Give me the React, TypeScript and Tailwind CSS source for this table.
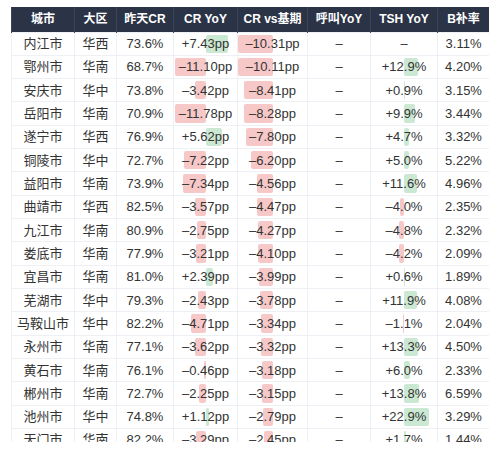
type Row = {
  city: string;
  region: string;
  cr: string;
  yoy: number;
  base: number;
  tsh: number | null;
  bRate: string;
};

const rows: Row[] = [
  { city: "内江市", region: "华西", cr: "73.6%", yoy: 7.43, base: -10.31, tsh: null, bRate: "3.11%" },
  { city: "鄂州市", region: "华南", cr: "68.7%", yoy: -11.1, base: -10.11, tsh: 12.9, bRate: "4.20%" },
  { city: "安庆市", region: "华中", cr: "73.8%", yoy: -3.42, base: -8.41, tsh: 0.9, bRate: "3.15%" },
  { city: "岳阳市", region: "华南", cr: "70.9%", yoy: -11.78, base: -8.28, tsh: 9.9, bRate: "3.44%" },
  { city: "遂宁市", region: "华西", cr: "76.9%", yoy: 5.62, base: -7.8, tsh: 4.7, bRate: "3.32%" },
  { city: "铜陵市", region: "华中", cr: "72.7%", yoy: -7.22, base: -6.2, tsh: 5.0, bRate: "5.22%" },
  { city: "益阳市", region: "华南", cr: "73.9%", yoy: -7.34, base: -4.56, tsh: 11.6, bRate: "4.96%" },
  { city: "曲靖市", region: "华西", cr: "82.5%", yoy: -3.57, base: -4.47, tsh: -4.0, bRate: "2.35%" },
  { city: "九江市", region: "华南", cr: "80.9%", yoy: -2.75, base: -4.27, tsh: -4.8, bRate: "2.32%" },
  { city: "娄底市", region: "华南", cr: "77.9%", yoy: -3.21, base: -4.1, tsh: -4.2, bRate: "2.09%" },
  { city: "宜昌市", region: "华南", cr: "81.0%", yoy: 2.39, base: -3.99, tsh: 0.6, bRate: "1.89%" },
  { city: "芜湖市", region: "华中", cr: "79.3%", yoy: -2.43, base: -3.78, tsh: 11.9, bRate: "4.08%" },
  { city: "马鞍山市", region: "华中", cr: "82.2%", yoy: -4.71, base: -3.34, tsh: -1.1, bRate: "2.04%" },
  { city: "永州市", region: "华南", cr: "77.1%", yoy: -3.62, base: -3.32, tsh: 13.3, bRate: "4.50%" },
  { city: "黄石市", region: "华南", cr: "76.1%", yoy: -0.46, base: -3.18, tsh: 6.0, bRate: "2.33%" },
  { city: "郴州市", region: "华南", cr: "72.7%", yoy: -2.25, base: -3.15, tsh: 13.8, bRate: "6.59%" },
  { city: "池州市", region: "华中", cr: "74.8%", yoy: 1.12, base: -2.79, tsh: 22.9, bRate: "3.29%" },
  { city: "天门市", region: "华南", cr: "82.2%", yoy: -3.29, base: -2.45, tsh: 1.7, bRate: "1.44%" },
];

const fmt = (v: number, digits: number, unit: string) =>
  (v >= 0 ? "+" : "–") + Math.abs(v).toFixed(digits) + unit;

function BarCell({ value, scale, half, text }: { value: number; scale: number; half: number; text: string }) {
  const w = Math.min(Math.abs(value) * scale, half);
  const pos = value >= 0;
  return (
    <td className="relative border border-[#edf0f5] p-0 text-center">
      <div
        className={pos ? "absolute top-[2px] bottom-[2px] left-1/2 rounded-[2px] bg-[#cbe8d2]" : "absolute top-[2px] bottom-[2px] right-1/2 rounded-[2px] bg-[#f7c8c8]"}
        style={{ width: w }}
      />
      <span className="relative">{text}</span>
    </td>
  );
}

export default function App() {
  const widths = [63, 42, 57, 64, 70, 63, 67, 52];
  const heads = ["城市", "大区", "昨天CR", "CR YoY", "CR vs基期", "呼叫YoY", "TSH YoY", "B补率"];
  return (
    <div className="w-[500px] h-[452px] bg-white pt-[7px] pl-[11px]" style={{ fontFamily: '"Liberation Sans", "Noto Sans CJK SC", sans-serif' }}>
      <div className="w-[478px] h-[435px] overflow-hidden">
        <table className="table-fixed border-collapse w-[478px] text-[13px] text-[#333]">
          <colgroup>
            {widths.map((w, i) => (
              <col key={i} style={{ width: w }} />
            ))}
          </colgroup>
          <thead>
            <tr className="h-[25px] bg-[#2b3447] text-white text-[12px] font-bold">
              {heads.map((h) => (
                <th key={h} className="border-x border-[#3c4558] p-0 text-center font-bold">
                  {h}
                </th>
              ))}
            </tr>
          </thead>
          <tbody>
            {rows.map((r) => (
              <tr key={r.city} className="h-[23.33px]">
                <td className="border border-[#edf0f5] p-0 text-center">{r.city}</td>
                <td className="border border-[#edf0f5] p-0 text-center">{r.region}</td>
                <td className="border border-[#edf0f5] p-0 text-center">{r.cr}</td>
                <BarCell value={r.yoy} scale={3} half={31} text={fmt(r.yoy, 2, "pp")} />
                <BarCell value={r.base} scale={3.42} half={35} text={fmt(r.base, 2, "pp")} />
                <td className="border border-[#edf0f5] p-0 text-center">–</td>
                {r.tsh === null ? (
                  <td className="border border-[#edf0f5] p-0 text-center">–</td>
                ) : (
                  <BarCell value={r.tsh} scale={1.08} half={33} text={fmt(r.tsh, 1, "%")} />
                )}
                <td className="border border-[#edf0f5] p-0 text-center">{r.bRate}</td>
              </tr>
            ))}
          </tbody>
        </table>
      </div>
    </div>
  );
}
